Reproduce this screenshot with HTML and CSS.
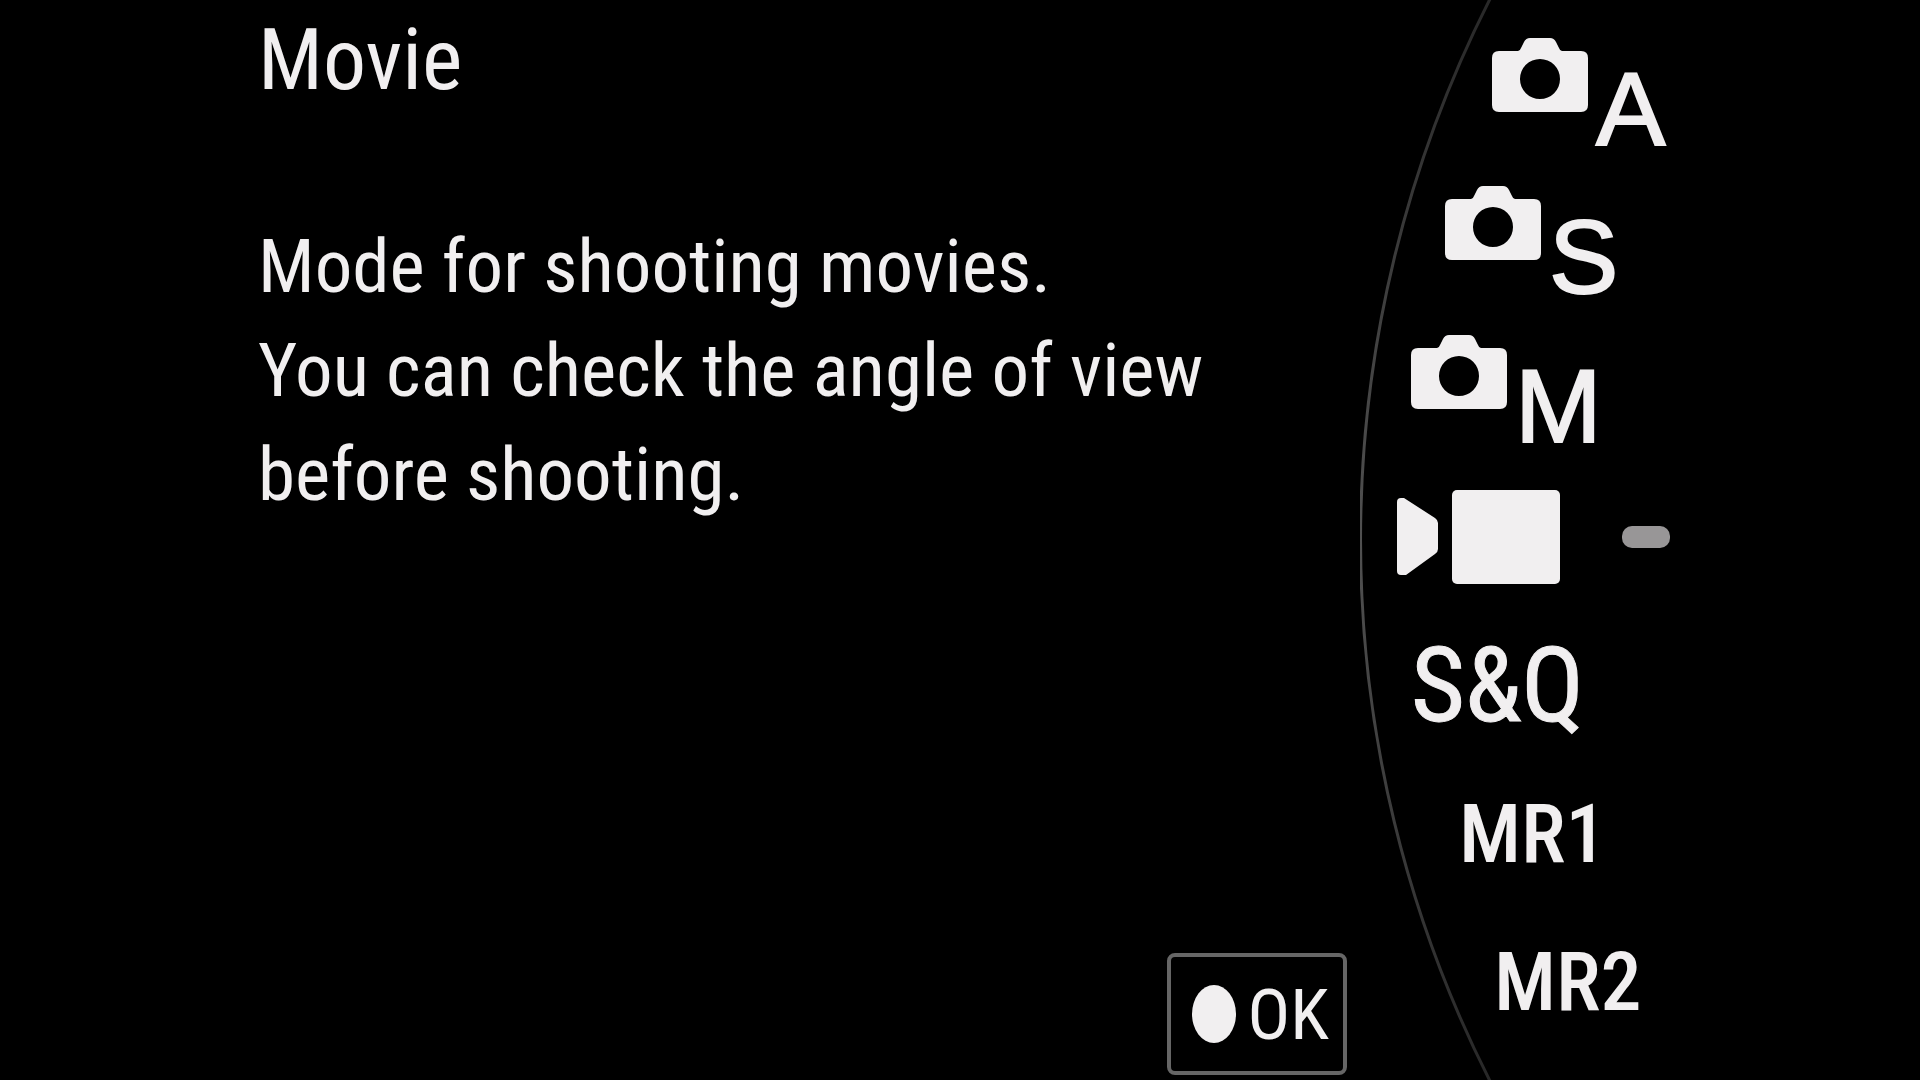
FILE: index.html
```html
<!DOCTYPE html>
<html lang="en">
<head>
  <meta charset="UTF-8">
  <meta name="viewport" content="width=device-width, initial-scale=1">
  <title>Movie</title>
  <link rel="stylesheet" href="styles.css">
</head>
<body>

  <main class="guide">
    <h1>Movie</h1>
    <p>Mode for shooting movies.<br>You can check the angle of view<br>before shooting.</p>

    <button class="ok-btn" type="button">
      <span class="dot"></span>
      <span>OK</span>
    </button>
  </main>

  <nav class="dial" aria-label="Shooting mode">
    <svg class="arc" viewBox="0 0 140 1080" preserveAspectRatio="none" aria-hidden="true">
      <defs>
        <linearGradient id="fade" gradientUnits="userSpaceOnUse" x1="0" y1="0" x2="0" y2="1080">
          <stop offset="0" stop-color="#282828"/>
          <stop offset="0.5" stop-color="#505050"/>
          <stop offset="1" stop-color="#282828"/>
        </linearGradient>
      </defs>
      <path d="M130 -1 A1195 1195 0 0 0 130 1081" fill="none" stroke="url(#fade)" stroke-width="3"/>
    </svg>

    <ul class="modes">
      <li class="step-3">
        <button class="mode still" type="button" aria-label="Still A">
          <svg class="camera" viewBox="0 0 96 74"><path fill-rule="evenodd" d="M7 13H26Q28 13 29 10L32 4Q34 0 38 0H58Q62 0 64 4L67 10Q68 13 70 13H89Q96 13 96 20V67Q96 74 89 74H7Q0 74 0 67V20Q0 13 7 13ZM48 21A20 20 0 1 0 48 61A20 20 0 1 0 48 21Z"/></svg>
          <span>A</span>
        </button>
      </li>
      <li class="step-2">
        <button class="mode still" type="button" aria-label="Still S">
          <svg class="camera" viewBox="0 0 96 74"><path fill-rule="evenodd" d="M7 13H26Q28 13 29 10L32 4Q34 0 38 0H58Q62 0 64 4L67 10Q68 13 70 13H89Q96 13 96 20V67Q96 74 89 74H7Q0 74 0 67V20Q0 13 7 13ZM48 21A20 20 0 1 0 48 61A20 20 0 1 0 48 21Z"/></svg>
          <span>S</span>
        </button>
      </li>
      <li class="step-1">
        <button class="mode still" type="button" aria-label="Still M">
          <svg class="camera" viewBox="0 0 96 74"><path fill-rule="evenodd" d="M7 13H26Q28 13 29 10L32 4Q34 0 38 0H58Q62 0 64 4L67 10Q68 13 70 13H89Q96 13 96 20V67Q96 74 89 74H7Q0 74 0 67V20Q0 13 7 13ZM48 21A20 20 0 1 0 48 61A20 20 0 1 0 48 21Z"/></svg>
          <span>M</span>
        </button>
      </li>
      <li class="step-0">
        <button class="mode movie" type="button" aria-label="Movie" aria-current="true">
          <svg class="film" viewBox="0 0 163 94">
            <path d="M0 12Q0 8 4 8H7L38 28Q41 30 41 33V59Q41 62 38 64L9 85H4Q0 85 0 81Z"/>
            <rect x="55" y="0" width="108" height="94" rx="5"/>
          </svg>
          <span class="marker"></span>
        </button>
      </li>
      <li class="step-1">
        <button class="mode slow-quick" type="button">S&amp;Q</button>
      </li>
      <li class="step-2 recall">
        <button class="mode memory" type="button">MR1</button>
      </li>
      <li class="step-3">
        <button class="mode memory" type="button">MR2</button>
      </li>
    </ul>
  </nav>

</body>
</html>
```
FILE: styles.css
```css
* {
  box-sizing: border-box;
}

body {
  margin: 0;
  min-height: 100vh;
  display: flex;
  background-color: #000;
  color: #f1eff0;
  font-family: "Roboto Condensed", Roboto, sans-serif;
  overflow: hidden;
}

button {
  padding: 0;
  border: none;
  background: none;
  color: inherit;
  font-family: inherit;
  cursor: pointer;
}

.guide {
  flex: 1;
  display: flex;
  flex-direction: column;
  padding: 8px 13px 5px 258px;
}

h1, p {
  margin: 0;
  font-weight: 400;
  line-height: 104px;
}

h1 {
  margin-bottom: 102px;
  font-size: 86px;
}

p {
  font-size: 75px;
}

.ok-btn {
  display: flex;
  align-items: center;
  gap: 12px;
  align-self: flex-end;
  height: 122px;
  margin-top: auto;
  padding: 0 14px 0 21px;
  border: 4px solid #666;
  border-radius: 8px;
  font-size: 71px;
}

.dot {
  width: 44px;
  height: 58px;
  border-radius: 50%;
  background-color: #f1eff0;
}

.dial {
  position: relative;
  flex: 0 0 560px;
}

/* rim of the mode dial, drawn behind the list */
.arc {
  position: absolute;
  top: 0;
  left: 0;
  width: 140px;
  height: 100%;
}

.modes {
  position: relative;
  display: flex;
  flex-direction: column;
  height: 100vh;
  margin: 0;
  padding: 18px 0 24px;
  list-style: none;
}

.modes li {
  flex: 1;
  display: flex;
  align-items: center;
}

/* the further from the middle, the more the rim curves away */
.step-0 { padding-left: 37px; }
.step-1 { padding-left: 51px; }
.step-2 { padding-left: 85px; }
.step-3 { padding-left: 132px; }
.recall { padding-left: 97px; }

.mode {
  display: flex;
  align-items: center;
}

.mode svg {
  fill: #f1eff0;
}

.still {
  align-items: flex-end;
  gap: 8px;
  font-family: "Liberation Sans", Arial, sans-serif;
  font-size: 104px;
  line-height: 74px;
  -webkit-text-stroke: 2px #f1eff0;
}

.camera {
  width: 96px;
  height: 74px;
  margin-bottom: 34px;
}

.film {
  width: 163px;
  height: 94px;
}

.movie {
  gap: 62px;
}

.marker {
  width: 48px;
  height: 22px;
  border-radius: 10px;
  background-color: #989697;
}

.slow-quick {
  font-size: 104px;
  -webkit-text-stroke: 1px #f1eff0;
}

.memory {
  padding-left: 2px;
  font-size: 82px;
  font-weight: 500;
}
```
